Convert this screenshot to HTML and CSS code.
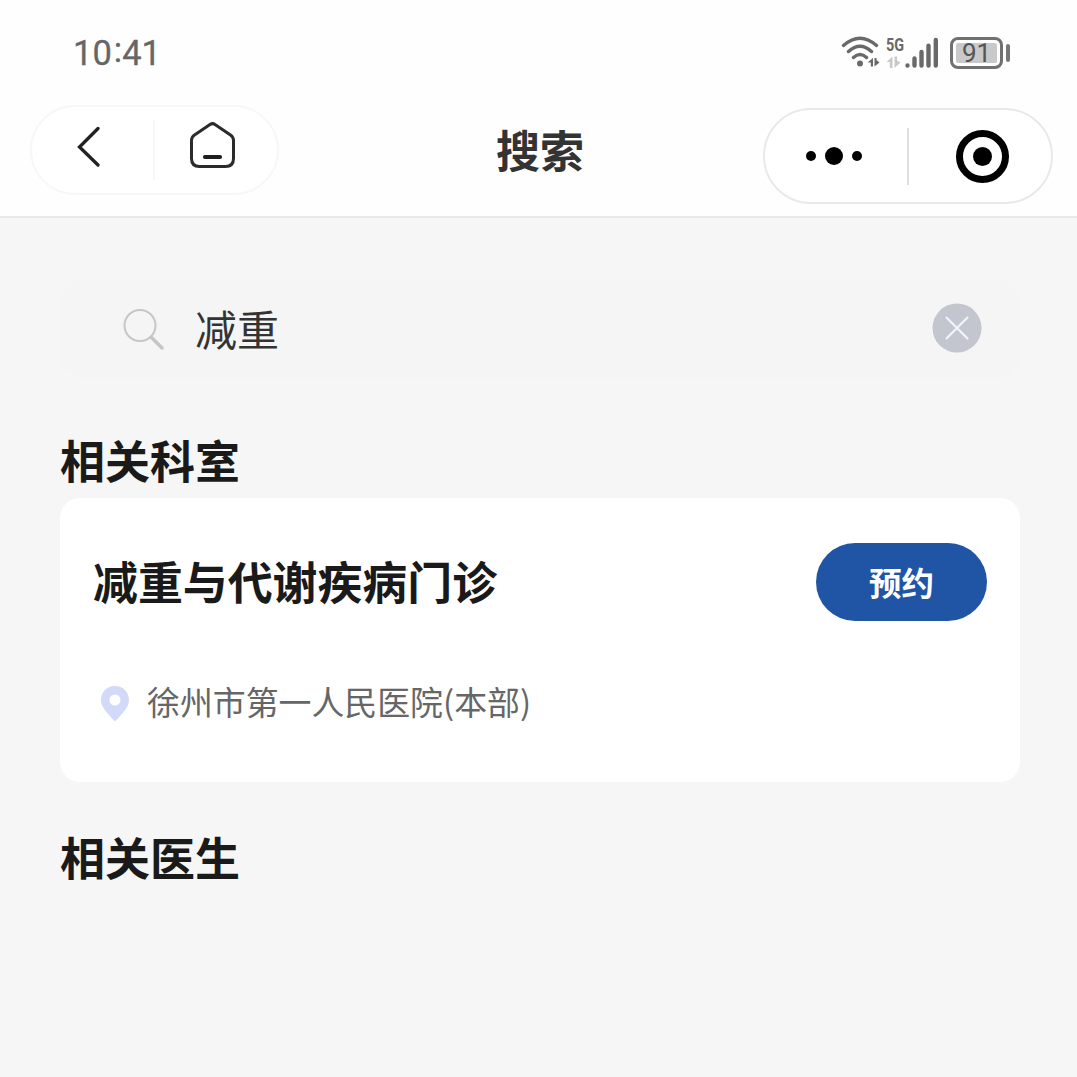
FILE: index.html
```html
<!DOCTYPE html>
<html lang="zh-CN">
<head>
<meta charset="utf-8">
<title>搜索</title>
<link rel="stylesheet" href="styles.css">
</head>
<body>
<header class="header">
  <div class="status">
    <span class="time">10<span class="colon">:</span>41</span>
    <div class="indicators">
      <svg class="wifi" width="40" height="34" viewBox="0 0 40 34" fill="none" stroke="#696969" stroke-width="3.400" stroke-linecap="round">
        <path d="M2.500 9.500Q19 -5 35.500 9.500M7.500 15.500Q19 5 30.500 15.500M12.500 21.500Q19 15.500 25.500 21.500"/>
        <circle cx="19" cy="27.500" r="3" fill="#696969" stroke="none"/>
        <path d="M26.500 26.500L32 22V30.500H29.800V26.500ZM33.500 22H35.500L35.500 24L38.500 26.500L33.500 30.500Z" fill="#696969" stroke="none"/>
      </svg>
      <div class="mobile">
        <span class="network">5G</span>
        <svg width="16" height="13" viewBox="0 0 16 13" fill="#c9c9c9"><path d="M0.500 6L6.500 0.500V12H3.800V6ZM8.500 0.500H11V4.500L14.500 6.500L8.500 12Z"/></svg>
      </div>
      <svg class="signal" width="34" height="32" viewBox="0 0 34 32" stroke="#696969" stroke-width="4.400" stroke-linecap="round"><path d="M2.500 28.500h.01M9.500 21.500v7M16.500 15v13.500M23.500 8.700v19.800M30.800 3v25.500"/></svg>
      <div class="battery"><span class="level">91</span></div>
      <span class="battery-tip"></span>
    </div>
  </div>
  <nav class="navbar">
    <div class="capsule capsule-left">
      <svg width="26" height="42" viewBox="0 0 26 42" fill="none" stroke="#222" stroke-width="3.300" stroke-linecap="round"><path d="M21 3.500L2.500 22l18.500 18"/></svg>
      <span class="divider"></span>
      <svg width="48" height="50" viewBox="0 0 48 50" fill="none" stroke="#2b2b2b" stroke-width="3" stroke-linejoin="round" stroke-linecap="round"><path d="M22 3.500Q24.500 1.800 27 3.500L42.500 14Q45.500 16 45.500 19.500V37.500Q45.500 45.500 37.500 45.500H11.500Q3.500 45.500 3.500 37.500V19.500Q3.500 16 6.500 14Z"/><path d="M17 36h15" stroke="#1e1e1e" stroke-width="4.200"/></svg>
    </div>
    <h1 class="title">搜索</h1>
    <div class="capsule capsule-right">
      <svg width="58" height="20" viewBox="0 0 58 20"><circle cx="5" cy="10" r="5"/><circle cx="28" cy="10" r="9"/><circle cx="51" cy="10" r="5"/></svg>
      <span class="divider"></span>
      <svg width="54" height="54" viewBox="0 0 54 54"><circle cx="27.500" cy="27.500" r="23" fill="none" stroke="#000" stroke-width="7"/><circle cx="27.500" cy="27.500" r="9.500"/></svg>
    </div>
  </nav>
</header>
<main class="content">
  <div class="search">
    <svg width="44" height="44" viewBox="0 0 44 44" fill="none" stroke="#c6c6c6" stroke-linecap="round"><circle cx="19" cy="18.500" r="15.500" stroke-width="2"/><path d="M30.500 30.500l10.500 10.500" stroke-width="3.500"/></svg>
    <span class="query">减重</span>
    <svg class="clear" width="50" height="50" viewBox="0 0 50 50"><circle cx="25" cy="25" r="24.500" fill="#c3c6cf"/><path d="M14.500 14.500l21 21M35.500 14.500L14.500 35.500" stroke="#f3f6ff" stroke-width="2" stroke-linecap="round"/></svg>
  </div>
  <h2 class="section-title">相关科室</h2>
  <article class="card">
    <div class="card-head">
      <h3 class="department">减重与代谢疾病门诊</h3>
      <button class="book">预约</button>
    </div>
    <div class="location">
      <svg class="pin" width="30" height="38" viewBox="0 0 30 38"><path fill="#d3daf9" fill-rule="evenodd" d="M15 1C7 1 1 7 1 15C1 22 6 27 15 36.500C24 27 29 22 29 15C29 7 23 1 15 1ZM15 9.500a5.500 5.500 0 1 1 0 11a5.500 5.500 0 1 1 0-11Z"/></svg>
      <span class="hospital">徐州市第一人民医院(本部)</span>
    </div>
  </article>
  <h2 class="section-title">相关医生</h2>
</main>
</body>
</html>
```
FILE: styles.css
```css
* { box-sizing: border-box; }
body {
  margin: 0;
  height: 1077px;
  overflow: hidden;
  background: #f6f6f6;
  color: #1a1a1a;
  font-family: "Noto Sans CJK SC", sans-serif;
}
svg { display: block; flex: none; }
h1, h2, h3 { margin: 0; font-weight: 700; }
.header {
  height: 218px;
  background: #fefefe;
  border-bottom: 2px solid #e9e9e9;
}
.status {
  height: 105px;
  padding: 0 67px 0 73px;
  display: flex;
  align-items: center;
  justify-content: space-between;
}
.time {
  font: 400 34.5px/40px Roboto, sans-serif;
  color: #666;
  -webkit-text-stroke: 0.3px #666;
}
.colon {
  display: inline-block;
  margin: 0 0 0 2px;
  transform: translateY(-3px);
}
.indicators { display: flex; align-items: center; }
.wifi { margin-top: 1px; }
.mobile {
  width: 20px;
  height: 33px;
  margin-left: 5px;
  display: flex;
  flex-direction: column;
  justify-content: space-between;
}
.network {
  font: 700 18px/17px Roboto, sans-serif;
  color: #696969;
  transform: scaleX(0.8);
  transform-origin: left;
}
.signal { margin-left: -1px; }
.battery {
  width: 53px;
  height: 32px;
  margin-left: 11px;
  padding: 3px;
  border: 3px solid #707070;
  border-radius: 8px;
}
.level {
  display: block;
  height: 20px;
  border-radius: 2px;
  background: #c9c9c9;
  color: #555;
  text-align: center;
  font: 400 26px/20px Roboto, sans-serif;
}
.battery-tip {
  width: 4px;
  height: 18px;
  margin-left: 3px;
  border-radius: 2px;
  background: #777;
}
.navbar {
  padding: 0 24px 0 30px;
  display: grid;
  grid-template-columns: 289px 1fr 289px;
  align-items: start;
}
.capsule {
  display: flex;
  align-items: center;
  background: #fff;
}
.capsule-left {
  width: 249px;
  height: 90px;
  padding: 0 41px 8px 45px;
  border: 2px solid #f7f7f7;
  border-radius: 45px;
  justify-content: space-between;
}
.capsule-left .divider {
  width: 2px;
  height: 60px;
  margin: 8px 0 0 17px;
  background: #f7f7f7;
}
.title {
  margin-top: 14px;
  padding-right: 3px;
  text-align: center;
  font-size: 44px;
  line-height: 60px;
  color: #333;
}
.capsule-right {
  width: 290px;
  height: 96px;
  margin: 3px 0 0 -1px;
  padding: 0 42px 0 41px;
  border: 2px solid #e9e9e9;
  border-radius: 48px;
  justify-content: space-between;
}
.capsule-right .divider {
  width: 2px;
  height: 57px;
  margin-right: 3px;
  background: #dedede;
}
.content { padding: 61px 57px 0 60px; }
.search {
  height: 100px;
  padding: 0 38px 0 61px;
  border-radius: 24px;
  background: #f5f5f5;
  display: flex;
  align-items: center;
}
.query {
  margin: -2px 0 0 30px;
  font-size: 42px;
  line-height: 60px;
  color: #333;
}
.clear { margin: 0 0 2px auto; }
.section-title {
  font-size: 45px;
  line-height: 60px;
}
.search + .section-title { margin-top: 51px; }
.card {
  height: 284px;
  margin: 8px 0 45px;
  padding: 45px 33px 0;
  border-radius: 20px;
  background: #fff;
}
.card-head {
  height: 78px;
  display: flex;
  align-items: center;
  justify-content: space-between;
}
.department {
  margin-top: -3px;
  font-size: 44.9px;
  line-height: 60px;
}
.book {
  width: 171px;
  height: 78px;
  padding: 0;
  border: 0;
  border-radius: 39px;
  background: #2054a5;
  color: #fff;
  font: 700 32.5px/48px "Noto Sans CJK SC", sans-serif;
}
.location {
  margin-top: 58px;
  padding-left: 7px;
  display: flex;
  align-items: center;
  gap: 17px;
  color: #666;
}
.pin { margin-top: 5px; }
.hospital {
  font-size: 32.9px;
  line-height: 44px;
}
```
